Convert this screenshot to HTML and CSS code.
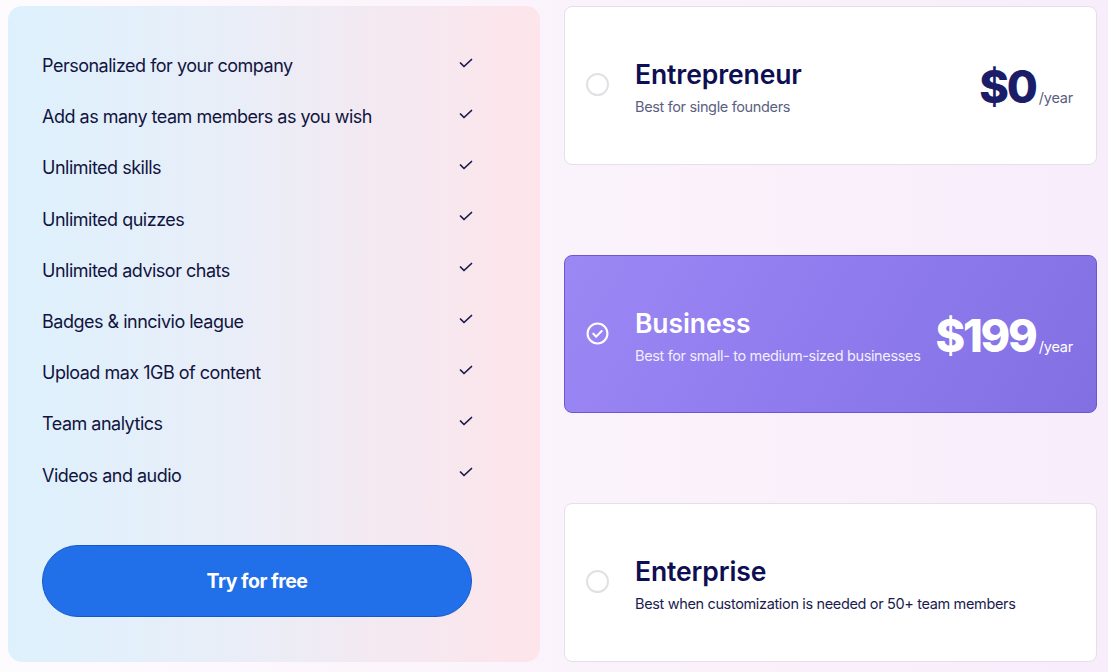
FILE: index.html
```html
<!DOCTYPE html>
<html>
<head>
<meta charset="utf-8">
<link rel="stylesheet" href="styles.css">
</head>
<body>
<div class="page">
  <section class="features">
    <ul class="feature-list">
      <li class="feature"><span>Personalized for your company</span><svg class="check" viewBox="0 0 14 10"><path d="M1.5 5 L5 8.5 L12.5 1.5"/></svg></li>
      <li class="feature"><span>Add as many team members as you wish</span><svg class="check" viewBox="0 0 14 10"><path d="M1.5 5 L5 8.5 L12.5 1.5"/></svg></li>
      <li class="feature"><span>Unlimited skills</span><svg class="check" viewBox="0 0 14 10"><path d="M1.5 5 L5 8.5 L12.5 1.5"/></svg></li>
      <li class="feature"><span>Unlimited quizzes</span><svg class="check" viewBox="0 0 14 10"><path d="M1.5 5 L5 8.5 L12.5 1.5"/></svg></li>
      <li class="feature"><span>Unlimited advisor chats</span><svg class="check" viewBox="0 0 14 10"><path d="M1.5 5 L5 8.5 L12.5 1.5"/></svg></li>
      <li class="feature"><span>Badges &amp; inncivio league</span><svg class="check" viewBox="0 0 14 10"><path d="M1.5 5 L5 8.5 L12.5 1.5"/></svg></li>
      <li class="feature"><span>Upload max 1GB of content</span><svg class="check" viewBox="0 0 14 10"><path d="M1.5 5 L5 8.5 L12.5 1.5"/></svg></li>
      <li class="feature"><span>Team analytics</span><svg class="check" viewBox="0 0 14 10"><path d="M1.5 5 L5 8.5 L12.5 1.5"/></svg></li>
      <li class="feature"><span>Videos and audio</span><svg class="check" viewBox="0 0 14 10"><path d="M1.5 5 L5 8.5 L12.5 1.5"/></svg></li>
    </ul>
    <button class="cta">Try for free</button>
  </section>
  <section class="plans">
    <div class="plan">
      <span class="radio"></span>
      <div class="plan-info">
        <div class="plan-name">Entrepreneur</div>
        <div class="plan-desc">Best for single founders</div>
      </div>
      <div class="price"><span class="amount">$0</span><span class="per">/year</span></div>
    </div>
    <div class="plan selected">
      <span class="radio checked"><svg viewBox="0 0 22 22"><circle cx="11" cy="11" r="9.5"/><path d="M7 11.2 L9.8 14 L15 8.6"/></svg></span>
      <div class="plan-info">
        <div class="plan-name">Business</div>
        <div class="plan-desc">Best for small- to medium-sized businesses</div>
      </div>
      <div class="price"><span class="amount">$199</span><span class="per">/year</span></div>
    </div>
    <div class="plan">
      <span class="radio"></span>
      <div class="plan-info">
        <div class="plan-name">Enterprise</div>
        <div class="plan-desc dark">Best when customization is needed or 50+ team members</div>
      </div>
    </div>
  </section>
</div>
</body>
</html>
```

FILE: styles.css
```css
* { box-sizing: border-box; }
html, body { margin: 0; padding: 0; }
body {
  width: 1108px;
  height: 672px;
  overflow: hidden;
  font-family: "Inter", "Noto Sans", sans-serif;
  background: linear-gradient(90deg, #fefbfe 0%, #fbf3fb 50%, #f8edfb 100%);
  color: #14164a;
}
.page {
  display: flex;
  gap: 24px;
  padding: 6px 11px 10px 8px;
  height: 672px;
}
.features {
  width: 532px;
  height: 656px;
  border-radius: 14px;
  background: linear-gradient(90deg, #ddf1fd 0%, #e8eef8 40%, #f5e8f0 75%, #fde5ea 100%);
  padding: 34px 68px 45px 34px;
  display: flex;
  flex-direction: column;
}
.feature-list {
  list-style: none;
  margin: 0;
  padding: 0;
}
.feature {
  height: 51.2px;
  display: flex;
  align-items: center;
  justify-content: space-between;
  font-size: 18px;
  letter-spacing: -0.5px;
  color: #12143f;
}
.check {
  width: 14px;
  height: 10px;
  margin-right: -1px;
  margin-top: -6px;
  fill: none;
  stroke: #181a4e;
  stroke-width: 1.7;
  stroke-linecap: round;
  stroke-linejoin: round;
}
.cta {
  margin-top: auto;
  height: 72px;
  width: 100%;
  border-radius: 36px;
  border: 1px solid #1558cc;
  background: #216fe9;
  color: #fff;
  font-family: "Inter", sans-serif;
  font-size: 19.5px;
  font-weight: 700;
  letter-spacing: -0.5px;
  cursor: pointer;
}
.plans {
  width: 533px;
  height: 656px;
  display: flex;
  flex-direction: column;
  justify-content: space-between;
}
.plan {
  height: 159px;
  background: #fff;
  border: 1px solid #e4dfe8;
  border-radius: 8px;
  display: flex;
  align-items: center;
  padding: 0 23px 0 21px;
}
.plan.selected {
  height: 158px;
  background: linear-gradient(120deg, #9c88f4 0%, #907cee 45%, #8270e2 100%);
  border-color: #6a58d3;
}
.radio {
  flex: none;
  width: 23px;
  height: 23px;
  border: 2px solid #e2e0e4;
  border-radius: 50%;
  background: #fff;
  margin-right: 26px;
  margin-top: -2px;
}
.radio.checked {
  border: none;
  background: none;
}
.radio.checked svg {
  width: 23px;
  height: 23px;
  display: block;
  fill: none;
  stroke: #fff;
  stroke-width: 2;
  stroke-linecap: round;
  stroke-linejoin: round;
}
.plan-info {
  flex: 1;
  margin-top: 5px;
}
.plan-name {
  font-size: 26.5px;
  line-height: 30px;
  font-weight: 600;
  letter-spacing: -0.1px;
  color: #0e0f52;
}
.plan-desc {
  margin-top: 8px;
  font-size: 14.5px;
  line-height: 20px;
  letter-spacing: -0.35px;
  color: #5b5f82;
}
.plan-desc.dark { color: #1a1c4f; }
.selected .plan-name { color: #fff; }
.selected .plan-desc { color: #f1eefe; }
.price {
  display: flex;
  align-items: baseline;
  white-space: nowrap;
  margin-top: 2px;
}
.amount {
  font-size: 45px;
  font-weight: 800;
  letter-spacing: -2.2px;
  color: #1b1d68;
}
.per {
  margin-left: 3px;
  font-size: 14.5px;
  letter-spacing: -0.2px;
  color: #5b5f82;
}
.selected .amount, .selected .per { color: #fff; }
```
